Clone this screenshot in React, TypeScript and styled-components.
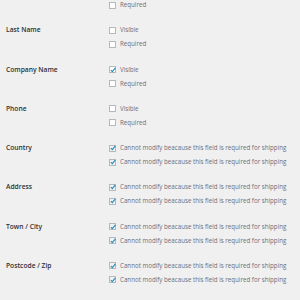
import React from "react";
import styled, { createGlobalStyle } from "styled-components";

const Global = createGlobalStyle`
  html, body { margin: 0; padding: 0; background: #f0f0f0; }
  body { font-family: "Open Sans", "Noto Sans", sans-serif; }
`;

const Page = styled.div`
  width: 300px;
  height: 300px;
  overflow: hidden;
  background: #f0f0f0;
`;

const Block = styled.div<{ $top?: number }>`
  display: grid;
  grid-template-columns: 109px 1fr;
  padding: ${(p) => (p.$top !== undefined ? p.$top : 8.65)}px 0 8.65px 0;
`;

const Label = styled.div`
  padding-left: 6px;
  font-size: 6.7px;
  font-weight: 600;
  color: #2c3036;
  line-height: 8px;
`;

const Options = styled.div`
  display: flex;
  flex-direction: column;
  gap: 6px;
`;

const Option = styled.label`
  display: flex;
  align-items: center;
  gap: 4px;
  height: 8px;
  font-size: 6.2px;
  line-height: 8px;
  color: #6e6e78;
  white-space: nowrap;
`;

const Box = styled.span<{ $disabled?: boolean }>`
  box-sizing: border-box;
  width: 7px;
  height: 7px;
  flex: none;
  border: 1px solid #b4b9be;
  background: ${(p) => (p.$disabled ? "#f2f2f2" : "#fefefe")};
  display: flex;
  align-items: center;
  justify-content: center;
`;

const Check = () => (
  <svg width="6" height="6" viewBox="0 0 6 6" style={{ overflow: "visible" }}>
    <path d="M0.8 3.2 L2.3 4.6 L5.4 0.9" fill="none" stroke="#1e8cbe" strokeWidth="1.1" />
  </svg>
);

const Opt = ({ text, checked, disabled }: { text: string; checked?: boolean; disabled?: boolean }) => (
  <Option>
    <Box $disabled={disabled}>{checked && <Check />}</Box>
    {text}
  </Option>
);

const SHIP = "Cannot modify beacause this field is required for shipping";

const fields: { name: string; visible: boolean; ship?: boolean }[] = [
  { name: "Last Name", visible: false },
  { name: "Company Name", visible: true },
  { name: "Phone", visible: false },
  { name: "Country", visible: true, ship: true },
  { name: "Address", visible: true, ship: true },
  { name: "Town / City", visible: true, ship: true },
  { name: "Postcode / Zip", visible: true, ship: true },
];

export default function App() {
  return (
    <Page>
      <Global />
      <Block $top={1}>
        <Label />
        <Options>
          <Opt text="Required" />
        </Options>
      </Block>
      {fields.map((f) => (
        <Block key={f.name}>
          <Label>{f.name}</Label>
          <Options>
            {f.ship ? (
              <>
                <Opt text={SHIP} checked disabled />
                <Opt text={SHIP} checked disabled />
              </>
            ) : (
              <>
                <Opt text="Visible" checked={f.visible} />
                <Opt text="Required" />
              </>
            )}
          </Options>
        </Block>
      ))}
    </Page>
  );
}
